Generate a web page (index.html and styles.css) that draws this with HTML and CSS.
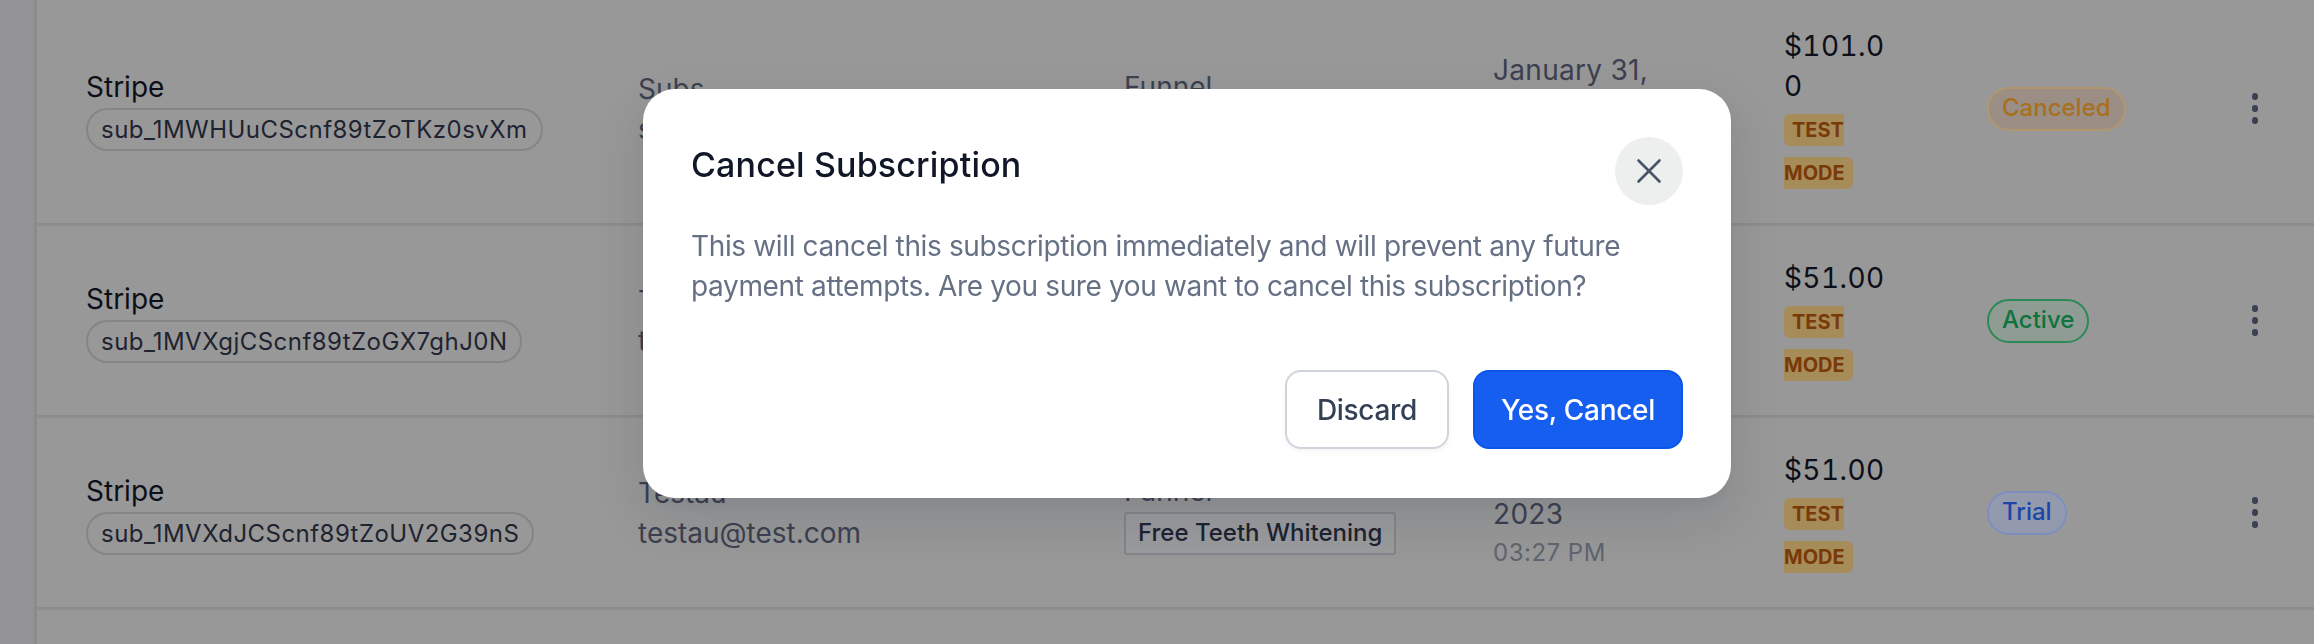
FILE: index.html
```html
<!DOCTYPE html>
<html lang="en">
<head>
<meta charset="utf-8">
<title>Subscriptions</title>
<link rel="stylesheet" href="styles.css">
</head>
<body>
<div class="page">
  <aside class="rail"></aside>
  <main class="list">
    <div class="row">
      <div class="source"><div>Stripe</div><span class="sub-id">sub_1MWHUuCScnf89tZoTKz0svXm</span></div>
      <div class="contact"><div>Subs</div><div>subs@test.com</div></div>
      <div class="funnel"><div>Funnel</div><span class="funnel-tag">Free Teeth Whitening</span></div>
      <div class="date">January 31, 2023<span class="time">03:27 PM</span></div>
      <div class="amount">$101.00<div class="mode-line"><span class="mode">TEST MODE</span></div></div>
      <div class="status-cell"><span class="status canceled">Canceled</span></div>
      <div class="more"><i></i><i></i><i></i></div>
    </div>
    <div class="row">
      <div class="source"><div>Stripe</div><span class="sub-id">sub_1MVXgjCScnf89tZoGX7ghJ0N</span></div>
      <div class="contact"><div>Test</div><div>test@test.com</div></div>
      <div class="funnel"><div>Funnel</div><span class="funnel-tag">Free Teeth Whitening</span></div>
      <div class="date">January 31, 2023<span class="time">03:27 PM</span></div>
      <div class="amount">$51.00<div class="mode-line"><span class="mode">TEST MODE</span></div></div>
      <div class="status-cell"><span class="status active">Active</span></div>
      <div class="more"><i></i><i></i><i></i></div>
    </div>
    <div class="row">
      <div class="source"><div>Stripe</div><span class="sub-id">sub_1MVXdJCScnf89tZoUV2G39nS</span></div>
      <div class="contact"><div>Testau</div><div>testau@test.com</div></div>
      <div class="funnel"><div>Funnel</div><span class="funnel-tag">Free Teeth Whitening</span></div>
      <div class="date">January 31, 2023<span class="time">03:27 PM</span></div>
      <div class="amount">$51.00<div class="mode-line"><span class="mode">TEST MODE</span></div></div>
      <div class="status-cell"><span class="status trial">Trial</span></div>
      <div class="more"><i></i><i></i><i></i></div>
    </div>
  </main>
</div>
<div class="scrim">
  <section class="modal" role="dialog" aria-labelledby="modal-title">
    <header class="modal-head">
      <h2 id="modal-title">Cancel Subscription</h2>
      <button class="close" aria-label="Close">
        <svg width="28" height="28" viewBox="0 0 28 28" fill="none"><path d="M3.5 3.5 24.5 24.5M24.5 3.5 3.5 24.5" stroke="#475467" stroke-width="2.6" stroke-linecap="round"/></svg>
      </button>
    </header>
    <p class="modal-text">This will cancel this subscription immediately and will prevent any future payment attempts. Are you sure you want to cancel this subscription?</p>
    <footer class="modal-actions">
      <button class="btn btn-secondary">Discard</button>
      <button class="btn btn-primary">Yes, Cancel</button>
    </footer>
  </section>
</div>
</body>
</html>
```

FILE: styles.css
```css
* { box-sizing: border-box; }
html, body { margin: 0; height: 100%; overflow: hidden; }
body { font-family: Inter, "Liberation Sans", sans-serif; background: #989898; color: #0c0f18; }

.page { display: flex; height: 644px; overflow: hidden; }
.rail { flex: 0 0 37px; background: #939395; border-right: 3px solid #8c8c8e; }
.list { flex: 1; margin-top: -6px; }

.row {
  display: grid;
  grid-template-columns: 552px 486px 369px 291px 203px 1fr 62px;
  align-items: center;
  padding: 26px 28px 26px 49px;
  border-bottom: 3px solid #8c8c8c;
  font-size: 28px;
  line-height: 40px;
  min-height: 192px;
}
.row:first-child { min-height: 232px; }

.source { line-height: 38px; padding-top: 2px; }
.sub-id {
  display: inline-block;
  margin-top: 2px;
  padding: 0 13px;
  height: 43px;
  line-height: 39px;
  font-size: 24px;
  letter-spacing: .46px;
  color: #1e2330;
  border: 2px solid #858585;
  border-radius: 22px;
}

.contact { color: #3c4150; padding-right: 40px; }
.funnel { color: #3c4150; }
.funnel-tag {
  display: inline-block;
  height: 43px;
  line-height: 38px;
  padding: 0 12px;
  font-size: 24px;
  font-weight: 500;
  color: #1e2330;
  background: #9a9b9d;
  border: 2px solid #84858a;
  border-radius: 3px;
}

.date { width: 175px; padding-bottom: 2.5px; color: #3c4150; letter-spacing: .3px; }
.time { display: block; margin-top: 2.5px; font-size: 24px; line-height: 32px; color: #5f6470; letter-spacing: .5px; }

.amount { width: 110px; padding-top: 4px; word-break: break-all; font-variant-numeric: tabular-nums; letter-spacing: .4px; }
.mode-line { font-size: 20px; line-height: 43px; padding-top: 3px; letter-spacing: 0; word-break: normal; }
.mode {
  padding: 4px 8px;
  font-weight: 700;
  color: #7a3a08;
  background: #a58c58;
  border-radius: 6px;
  box-decoration-break: slice;
}

.status {
  display: inline-block;
  height: 44px;
  line-height: 38px;
  padding: 0 13px;
  font-size: 24px;
  font-weight: 500;
  border: 2px solid;
  border-radius: 22px;
}
.canceled { color: #a8701e; background: #9b8f85; border-color: #b4966e; }
.active { color: #0f7340; background: #8e9c93; border-color: #2a8a55; }
.trial { color: #1b45a8; background: #939aae; border-color: #7d8fc0; }

.more { display: flex; flex-direction: column; align-items: center; gap: 5.5px; width: 6px; justify-self: center; }
.more i { display: block; width: 6.5px; height: 6.5px; flex: none; border-radius: 50%; background: #3b4052; }

.scrim { position: fixed; inset: 0; display: flex; align-items: flex-start; padding: 89px 0 0 643px; }
.modal {
  width: 1088px;
  height: 409px;
  padding: 48px;
  background: #fff;
  border-radius: 32px;
  box-shadow: 0 20px 48px 8px rgba(16, 24, 40, .09), 0 8px 16px rgba(16, 24, 40, .04);
}
.modal-head { display: flex; justify-content: space-between; align-items: flex-start; }
.modal-head h2 { margin: 0; font-size: 34px; line-height: 56px; font-weight: 500; letter-spacing: .15px; color: #101828; }
.close {
  display: flex; align-items: center; justify-content: center;
  width: 68px; height: 68px; padding: 0;
  background: #edeeee; border: 0; border-radius: 50%;
}
.modal-text { margin: 21px 0 0; font-size: 28px; line-height: 40px; letter-spacing: -.36px; color: #667085; }
.modal-actions { display: flex; justify-content: flex-end; gap: 24px; margin-top: 64px; }
.btn { height: 79px; font: 500 28px/40px Inter, "Liberation Sans", sans-serif; letter-spacing: -.3px; border-radius: 16px; }
.btn-secondary { padding: 0 30px; color: #344054; background: #fff; border: 2px solid #d0d5dd; box-shadow: 0 2px 4px rgba(16, 24, 40, .05); }
.btn-primary { padding: 0 26px; color: #fff; background: #155eef; border: 2px solid #0a55ea; }
```
